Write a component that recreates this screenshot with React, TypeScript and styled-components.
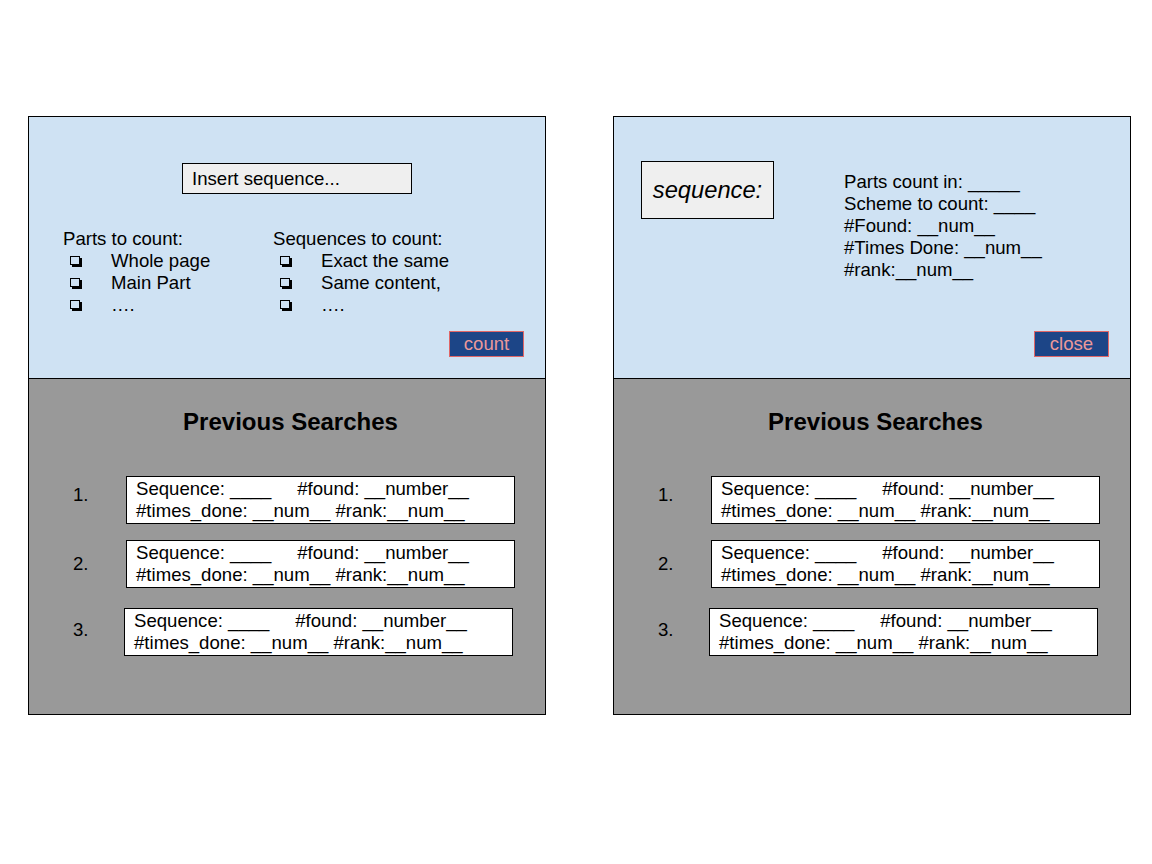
import React from "react";
import styled, { createGlobalStyle } from "styled-components";

const GlobalStyle = createGlobalStyle`
  html, body {
    margin: 0;
    padding: 0;
    background: #ffffff;
  }
  body {
    font-family: "Liberation Sans", Arial, sans-serif;
    color: #000000;
  }
`;

const Page = styled.div`
  display: flex;
  align-items: flex-start;
  gap: 67px;
  padding: 116px 0 0 28px;
  width: 1152px;
  height: 864px;
  box-sizing: border-box;
`;

const Panel = styled.section`
  width: 518px;
  display: flex;
  flex-direction: column;
`;

const TopSection = styled.div`
  box-sizing: border-box;
  height: 263px;
  border: 1px solid #000;
  background: #cfe2f3;
  display: flex;
  flex-direction: column;
`;

const BottomSection = styled.div`
  box-sizing: border-box;
  height: 336px;
  border: 1px solid #000;
  border-top: none;
  background: #999999;
  display: flex;
  flex-direction: column;
  padding-top: 29px;
`;

const InputBox = styled.div`
  box-sizing: border-box;
  margin: 46px 0 0 153px;
  width: 230px;
  height: 31px;
  border: 1px solid #000;
  background: #efefef;
  padding-left: 9px;
  display: flex;
  align-items: center;
  font-size: 18.6px;
`;

const Options = styled.div`
  display: grid;
  grid-template-columns: 210px auto;
  margin-top: 34px;
  padding-left: 34px;
  font-size: 18.6px;
  line-height: 22px;
`;

const OptionColumn = styled.div`
  display: flex;
  flex-direction: column;
`;

const OptionItem = styled.div`
  display: flex;
  align-items: center;
  height: 22px;
`;

const CheckBox = styled.span`
  box-sizing: border-box;
  display: inline-block;
  width: 10px;
  height: 9px;
  border: 1.5px solid #000;
  box-shadow: 2px 2px 0 #000;
  margin: 0 31px 1px 7px;
`;

const ActionButton = styled.div`
  box-sizing: border-box;
  margin-top: auto;
  margin-bottom: 21px;
  margin-right: 21px;
  align-self: flex-end;
  width: 75px;
  height: 26px;
  border: 1px solid #e06666;
  background: #1c4587;
  color: #ea9999;
  font-size: 18.6px;
  display: flex;
  align-items: center;
  justify-content: center;
`;

const TopRow = styled.div`
  display: flex;
  align-items: flex-start;
  padding: 44px 0 0 27px;
`;

const SequenceBox = styled.div`
  box-sizing: border-box;
  width: 133px;
  height: 58px;
  border: 1px solid #000;
  background: #efefef;
  display: flex;
  align-items: center;
  justify-content: center;
  font-style: italic;
  font-size: 23.7px;
`;

const InfoList = styled.div`
  margin: 10px 0 0 70px;
  font-size: 18.6px;
  line-height: 22px;
  white-space: pre;
`;

const Title = styled.h2`
  margin: 0;
  padding-left: 7px;
  text-align: center;
  font-size: 24px;
  line-height: 28px;
  font-weight: bold;
`;

const SearchList = styled.div`
  display: flex;
  flex-direction: column;
  margin-top: 40px;
`;

const SearchRow = styled.div<{ $gap: number }>`
  display: flex;
  align-items: center;
  padding-left: 44px;
  margin-top: ${(p) => p.$gap}px;
`;

const Index = styled.div<{ $shift: number; $width: number }>`
  width: ${(p) => p.$width}px;
  font-size: 18.6px;
  line-height: 22px;
  padding-bottom: ${(p) => (p.$shift < 0 ? -2 * p.$shift : 0)}px;
  padding-top: ${(p) => (p.$shift > 0 ? 2 * p.$shift : 0)}px;
`;

const SearchCard = styled.div`
  box-sizing: border-box;
  width: 389px;
  border: 1px solid #000;
  background: #ffffff;
  padding: 1px 0 1px 9px;
  font-size: 18.6px;
  line-height: 22px;
  white-space: pre;
`;

const searches = [
  { n: "1.", gap: 0, shift: -5, width: 53 },
  { n: "2.", gap: 16, shift: 0, width: 53 },
  { n: "3.", gap: 20, shift: -2, width: 51 },
];

const PreviousSearches: React.FC = () => (
  <BottomSection>
    <Title>Previous Searches</Title>
    <SearchList>
      {searches.map((s) => (
        <SearchRow key={s.n} $gap={s.gap}>
          <Index $shift={s.shift} $width={s.width}>
            {s.n}
          </Index>
          <SearchCard>
            <div>{"Sequence: ____     #found: __number__"}</div>
            <div>{"#times_done: __num__ #rank:__num__"}</div>
          </SearchCard>
        </SearchRow>
      ))}
    </SearchList>
  </BottomSection>
);

const parts = ["Whole page", "Main Part", "…."];
const seqs = ["Exact the same", "Same content,", "…."];

export default function App() {
  return (
    <>
      <GlobalStyle />
      <Page>
        <Panel>
          <TopSection>
            <InputBox>Insert sequence...</InputBox>
            <Options>
              <OptionColumn>
                <div>Parts to count:</div>
                {parts.map((p, i) => (
                  <OptionItem key={i}>
                    <CheckBox />
                    <span>{p}</span>
                  </OptionItem>
                ))}
              </OptionColumn>
              <OptionColumn>
                <div>Sequences to count:</div>
                {seqs.map((p, i) => (
                  <OptionItem key={i}>
                    <CheckBox />
                    <span>{p}</span>
                  </OptionItem>
                ))}
              </OptionColumn>
            </Options>
            <ActionButton>count</ActionButton>
          </TopSection>
          <PreviousSearches />
        </Panel>
        <Panel>
          <TopSection>
            <TopRow>
              <SequenceBox>sequence:</SequenceBox>
              <InfoList>
                <div>Parts count in: _____</div>
                <div>Scheme to count: ____</div>
                <div>#Found: __num__</div>
                <div>#Times Done: __num__</div>
                <div>#rank:__num__</div>
              </InfoList>
            </TopRow>
            <ActionButton>close</ActionButton>
          </TopSection>
          <PreviousSearches />
        </Panel>
      </Page>
    </>
  );
}
